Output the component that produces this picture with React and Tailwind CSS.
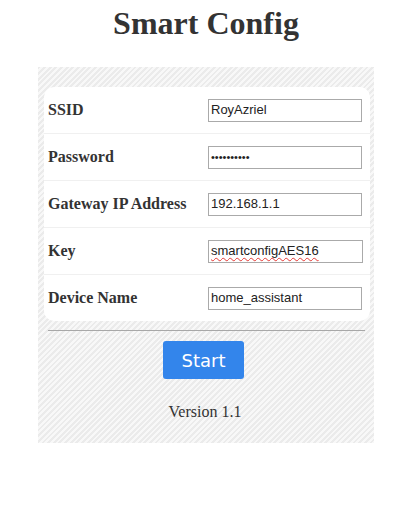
export default function App() {
  const rows = [
    { label: "SSID", value: "RoyAzriel" },
    { label: "Password", value: "••••••••••", pw: true },
    { label: "Gateway IP Address", value: "192.168.1.1" },
    { label: "Key", value: "smartconfigAES16", squiggle: true, wide: true },
    { label: "Device Name", value: "home_assistant" },
  ];
  return (
    <div className="w-[412px] h-[512px] bg-white font-['Liberation_Serif',serif] text-[#333]">
      <h1 className="pt-[5px] text-center text-[32px] font-bold leading-[37px]">Smart Config</h1>
      <div className="mx-auto mt-[25px] w-[336px] pt-[20px] pl-[6px] pr-[4px] pb-[22px] bg-[image:repeating-linear-gradient(135deg,#ebebeb_0px,#ebebeb_2px,#f8f8f8_2px,#f8f8f8_4px)]">
        <div className="rounded-[10px] bg-white">
          {rows.map((r, i) => (
            <div
              key={r.label}
              className={
                "flex items-center pl-[4px] " +
                (i < rows.length - 1 ? "h-[47px] border-b border-[#f0f0f0]" : "h-[46px]")
              }
            >
              <div className="w-[160px] text-[16px] font-bold">{r.label}</div>
              <div
                className={
                  "flex h-[23px] items-center border border-[#aaa] bg-white pl-[2px] font-['Liberation_Sans',sans-serif] text-[13px] text-[#222] " +
                  (r.wide ? "w-[155px]" : "w-[154px]")
                }
              >
                {r.squiggle ? (
                  <span className="underline decoration-wavy decoration-[#e53935] decoration-[1px] underline-offset-[2px]">
                    {r.value}
                  </span>
                ) : (
                  <span className={r.pw ? "text-[11px]" : ""}>{r.value}</span>
                )}
              </div>
            </div>
          ))}
        </div>
        <div className="ml-[4px] mr-[5px] mt-[9px] h-px bg-[#a8a8a8]" />
        <div className="mt-[10px] flex pl-[119px]">
          <div className="flex h-[38px] w-[81px] items-center justify-center rounded-[3px] bg-[#3385eb] font-['DejaVu_Sans',sans-serif] text-[18px] text-white">
            Start
          </div>
        </div>
        <div className="mt-[24px] pr-[4px] text-center text-[16px] leading-[18px]">Version 1.1</div>
      </div>
    </div>
  );
}
